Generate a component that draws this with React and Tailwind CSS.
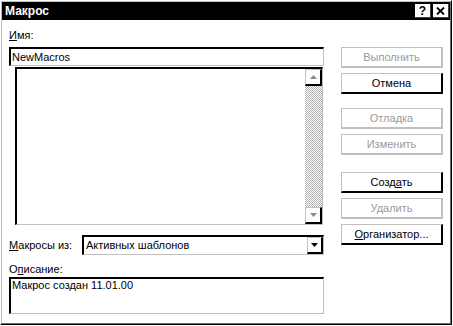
import React from "react";

const font = { fontFamily: '"Liberation Sans", Arial, sans-serif' };

function Btn({ children, disabled, className = "" }) {
  const base = "h-[21px] w-full flex items-center justify-center text-[11px] leading-[13px] bg-white";
  const look = disabled
    ? "border-t border-l border-r-2 border-b-2 border-[#c0c0c0] text-[#9a9a9a]"
    : "border-t border-l border-[#c0c0c0] border-r-2 border-b-2 border-r-black border-b-black text-black";
  return <div className={`${base} ${look} ${className}`}>{children}</div>;
}

function Arrow({ up, color }) {
  return (
    <svg width="7" height="4" viewBox="0 0 7 4">
      {up ? <path d="M3.5 0 L7 4 L0 4 Z" fill={color} /> : <path d="M0 0 L7 0 L3.5 4 Z" fill={color} />}
    </svg>
  );
}

function ScrollBtn({ up }) {
  return (
    <div className="h-[17px] w-[17px] flex items-center justify-center bg-white border-t border-l border-[#c0c0c0] border-r-2 border-b-2 border-r-black border-b-black">
      <Arrow up={up} color="#8a8a8a" />
    </div>
  );
}

export default function App() {
  return (
    <div className="w-[453px] h-[326px] bg-white select-none" style={font}>
      <div className="w-[452px] h-[325px] border-t border-l border-white border-r border-b border-r-black border-b-black">
        <div className="w-full h-full border-t border-l border-[#c0c0c0] border-r border-b border-r-[#6a6a6a] border-b-[#6a6a6a] flex flex-col">
          {/* title bar */}
          <div className="h-[18px] bg-black flex items-center justify-between pl-[3px] pr-[1px]">
            <span className="text-white font-bold text-[12px] leading-[14px]">Макрос</span>
            <div className="flex gap-[2px]">
              <div className="w-[16px] h-[14px] bg-white border-r border-b border-[#404040] flex items-center justify-center text-black font-bold text-[12px] leading-[12px]">
                ?
              </div>
              <div className="w-[16px] h-[14px] bg-white border-r border-b border-[#404040] flex items-center justify-center">
                <svg width="9" height="8" viewBox="0 0 9 8">
                  <path d="M1 0.5 L8 7.5 M8 0.5 L1 7.5" stroke="black" strokeWidth="1.8" />
                </svg>
              </div>
            </div>
          </div>

          {/* body */}
          <div className="flex pl-[7px] pt-[9px] text-[11px] leading-[13px] text-black">
            <div className="w-[315px] flex flex-col">
              <div>
                <span className="underline">И</span>мя:
              </div>
              <div className="mt-[5px] h-[19px] border-t-2 border-l-2 border-t-black border-l-black border-r border-b border-[#c0c0c0] flex items-center pl-[1px]">
                NewMacros
              </div>
              <div className="mt-[1px] ml-[6px] w-[308px] h-[158px] border-t-2 border-l-2 border-t-black border-l-black border-r border-b border-[#c0c0c0] flex">
                <div className="flex-1 bg-white" />
                <div className="w-[17px] flex flex-col">
                  <ScrollBtn up />
                  <div className="flex-1 bg-[repeating-conic-gradient(#b0b0b0_0_25%,#ffffff_0_50%)] bg-[length:2px_2px]" />
                  <ScrollBtn />
                </div>
              </div>

              <div className="mt-[10px] flex items-center">
                <div className="w-[73px]">
                  <span className="underline">М</span>акросы из:
                </div>
                <div className="w-[242px] h-[20px] border-t-2 border-l-2 border-t-black border-l-black border-r border-b border-[#c0c0c0] flex items-center">
                  <div className="flex-1 pl-[2px]">Активных шаблонов</div>
                  <div className="w-[16px] h-[17px] flex items-center justify-center bg-white border-t border-l border-[#c0c0c0] border-r-2 border-b-2 border-r-black border-b-black">
                    <Arrow color="#000" />
                  </div>
                </div>
              </div>

              <div className="mt-[8px]">
                О<span className="underline">п</span>исание:
              </div>
              <div className="mt-[1px] h-[37px] border-t-2 border-l-2 border-t-black border-l-black border-r border-b border-[#c0c0c0] pl-[1px]">
                Макрос создан 11.01.00
              </div>
            </div>

            <div className="ml-[17px] w-[102px] flex flex-col pt-[18px]">
              <Btn disabled>Выполнить</Btn>
              <Btn className="mt-[5px]">Отмена</Btn>
              <Btn disabled className="mt-[14px]">Отладка</Btn>
              <Btn disabled className="mt-[5px]">Изменить</Btn>
              <Btn className="mt-[17px]">
                Созд<span className="underline">а</span>ть
              </Btn>
              <Btn disabled className="mt-[5px]">Удалить</Btn>
              <Btn className="mt-[5px]">
                <span className="underline">О</span>рганизатор...
              </Btn>
            </div>
          </div>
        </div>
      </div>
    </div>
  );
}
